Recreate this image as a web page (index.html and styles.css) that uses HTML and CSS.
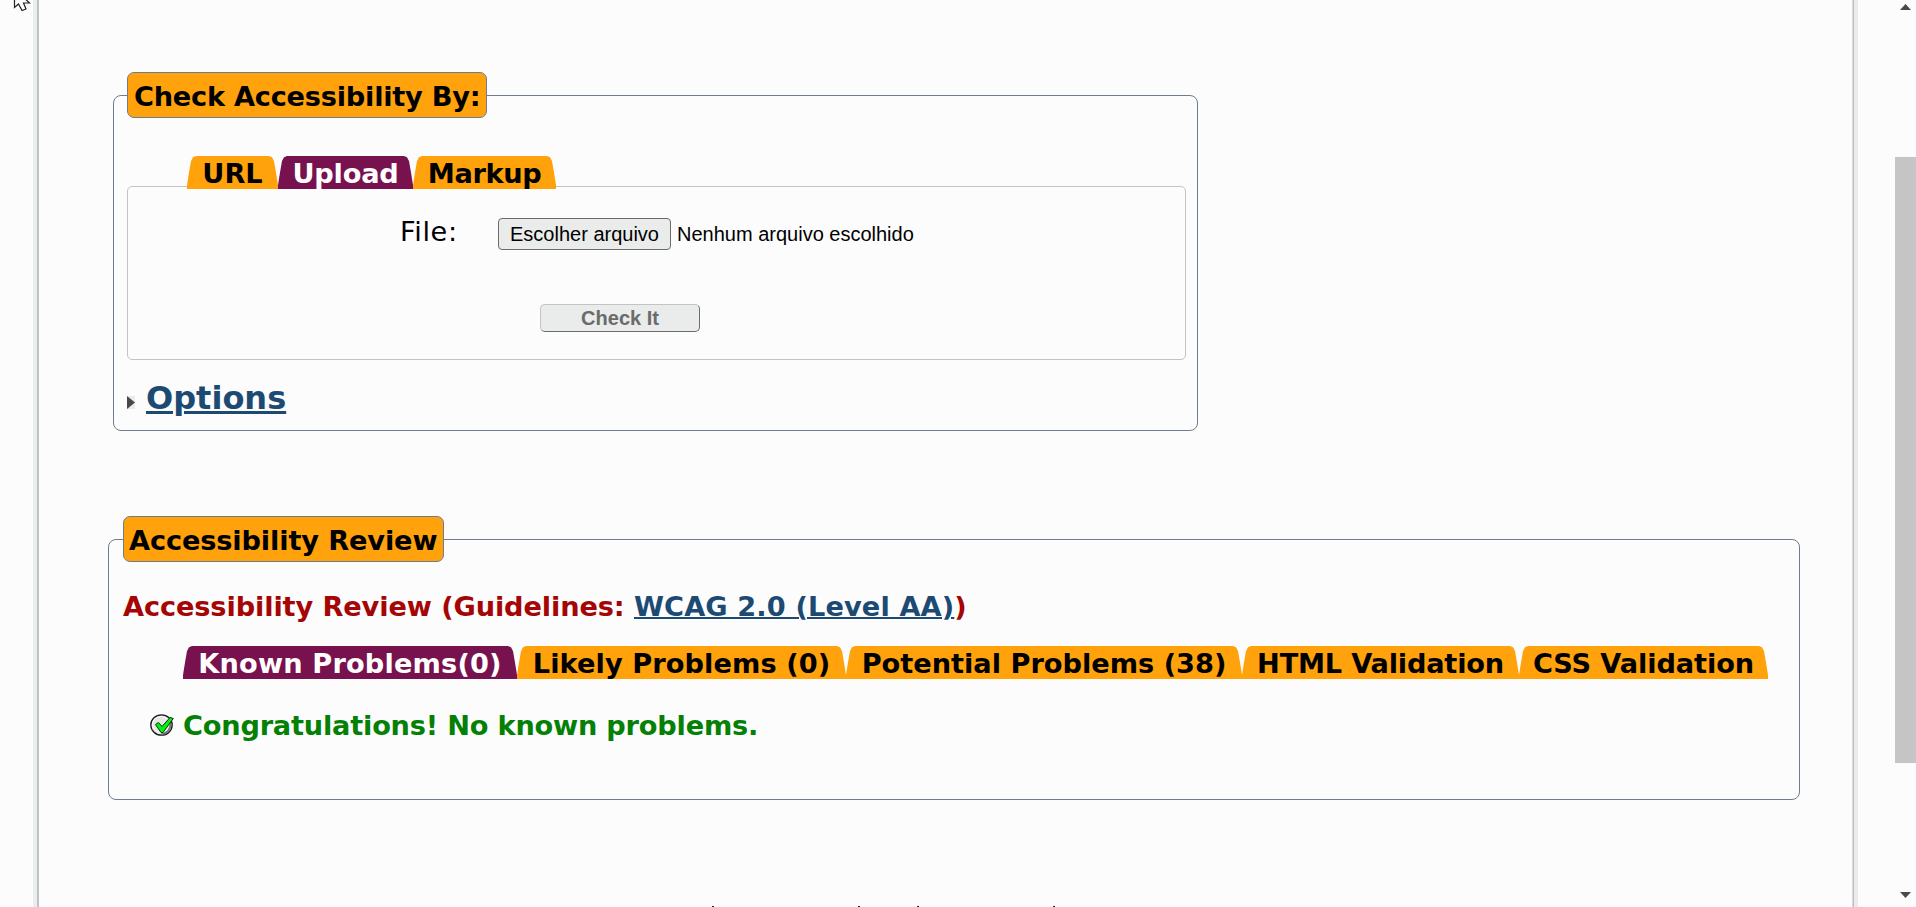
FILE: index.html
```html
<!DOCTYPE html>
<html lang="en">
<head>
<meta charset="utf-8">
<title>Accessibility Checker</title>
<link rel="stylesheet" href="styles.css">
</head>
<body>
<div class="window">
  <main class="page">
    <section class="box checker">
      <h2 class="legend legend-check"><span>Check Accessibility By:</span></h2>
      <nav class="tabs input-tabs">
        <a class="tab t-url">URL</a><a class="tab active t-upload">Upload</a><a class="tab t-markup">Markup</a>
      </nav>
      <div class="panel">
        <div class="file-row">
          <label class="file-label">File:</label>
          <button class="choose">Escolher arquivo</button>
          <span class="file-name">Nenhum arquivo escolhido</span>
        </div>
        <button class="submit">Check It</button>
      </div>
      <div class="options">
        <svg class="arrow" width="8" height="13" viewBox="0 0 8 13"><rect width="8" height="13" fill="#e9ecec"/><path d="M0 0 8 6.5 0 13z" fill="#484848"/></svg>
        <a class="link">Options</a>
      </div>
    </section>

    <section class="box review">
      <h2 class="legend legend-review"><span>Accessibility Review</span></h2>
      <h3 class="guideline">Accessibility Review (Guidelines: <a class="link">WCAG 2.0 (Level AA)</a>)</h3>
      <nav class="tabs result-tabs">
        <a class="tab active t-known">Known Problems(0)</a><a class="tab t-likely">Likely Problems (0)</a><a class="tab t-potential">Potential Problems (38)</a><a class="tab t-html">HTML Validation</a><a class="tab t-css">CSS Validation</a>
      </nav>
      <p class="congrats">
        <svg class="ok" width="24" height="22" viewBox="0 0 24 22"><ellipse cx="11.500" cy="11" rx="10.700" ry="10.200" fill="#dcdcdc" stroke="#1a1a1a" stroke-width="1.300"/><ellipse cx="11" cy="10.500" rx="8.500" ry="8" fill="#e6e6e6" stroke="#fff" stroke-width="1.200"/><path d="M20.500 9c0 6-3 10.500-9 11" fill="none" stroke="#777" stroke-width="2"/><path d="M5.500 10.500 8.500 8.500l3.500 4L20 3.500l3.300 1L13 18.500h-2z" fill="#00f50a" stroke="#0b300b" stroke-width="1"/></svg>
        <span>Congratulations! No known problems.</span>
      </p>
    </section>
    <footer class="next-line"><i></i><i></i><i></i><i></i></footer>
  </main>
  <aside class="scrollbar">
    <svg width="11" height="6" viewBox="0 0 11 6"><path d="M0 6 5.500 0 11 6z" fill="#4a4a4a"/></svg>
    <div class="thumb"></div>
    <svg width="11" height="6" viewBox="0 0 11 6"><path d="M0 0 5.500 6 11 0z" fill="#4a4a4a"/></svg>
  </aside>
</div>
<svg class="cursor" width="22" height="11" viewBox="0 0 22 11"><path d="M2.500-8V7.500L6.500 4l3.500 6.500 4-1.500L11.500 3H17.500L6-8" fill="#fff" stroke="#222" stroke-width="1.200"/></svg>
</body>
</html>
```
FILE: styles.css
```css
* { box-sizing: border-box; }
body {
  margin: 0;
  background: #fcfcfc;
  color: #000;
  font-family: "DejaVu Sans", Verdana, sans-serif;
  font-size: 27.2px;
  overflow: hidden;
}
.window { display: flex; height: 907px; }
.page {
  display: flex;
  flex-direction: column;
  align-items: flex-start;
  width: 1825px;
  margin-left: 33px;
  border-left: 4px solid #e9eded;
  border-right: 4px solid #ebebeb;
  box-shadow: inset 2px 0 #c2c2c2, inset -1px 0 #bebebe, inset -2px 0 #d9d9e2;
  padding: 72px 0 0 71px;
}
.box { border: 1px solid #6f7c8f; border-radius: 8px; }
.checker { width: 1085px; height: 336px; margin: 23px 0 0 5px; padding: 0 11px 0 13px; }
.review { width: 1692px; height: 261px; margin-top: 108px; padding: 0 14px; }

.legend {
  display: flex;
  align-items: center;
  height: 46px;
  margin: -24px 0 0;
  padding: 3px 0 0 6px;
  border: 1px solid #6f7c8f;
  border-radius: 7px;
  background: #ffa20c;
  font-size: 27.2px;
  font-weight: bold;
  white-space: nowrap;
}
.legend-check { width: 360px; letter-spacing: -.23px; }
.legend-review { width: 321px; padding-left: 5px; letter-spacing: -.13px; }

.tabs { display: flex; position: relative; font-weight: bold; }
.tab {
  height: 33px;
  line-height: 36px;
  text-align: center;
  white-space: nowrap;
  background: #ffa20c;
  clip-path: polygon(0 100%, 0 88%, 2px 50%, 4px 15%, 6px 4%, 9px 0, calc(100% - 9px) 0, calc(100% - 6px) 4%, calc(100% - 4px) 15%, calc(100% - 2px) 50%, 100% 88%, 100% 100%);
}
.active { background: #77124f; color: #fff; }
.input-tabs { margin: 38px 0 0 60px; }
.t-url { width: 91px; }
.t-upload { width: 135px; letter-spacing: -.2px; }
.t-markup { width: 143px; letter-spacing: -.35px; }

.panel {
  height: 174px;
  margin-top: -3px;
  padding: 31px 0 0 272px;
  border: 1px solid #c3c3c3;
  border-radius: 5px;
}
.file-row { display: flex; align-items: center; height: 32px; }
.file-label { width: 98px; line-height: 32px; padding-bottom: 5px; letter-spacing: .6px; }
button, .file-name { font-family: "Liberation Sans", Arial, sans-serif; font-size: 20px; white-space: nowrap; }
.choose {
  width: 173px;
  height: 32px;
  padding: 0;
  border: 1px solid #6b6b6b;
  border-radius: 4px;
  background: #e9ecea;
}
.file-name { margin-left: 6px; }
.submit {
  display: block;
  width: 160px;
  height: 28px;
  margin: 54px 0 0 140px;
  padding: 0;
  border: 1px solid;
  border-color: #c3c3c3 #6b6b6b #6b6b6b #c3c3c3;
  border-radius: 5px;
  background: #e9ecea;
  color: #6b6b6b;
  font-weight: bold;
}
.options { display: flex; align-items: center; height: 52px; margin-top: 12px; font-size: 32px; font-weight: bold; }
.arrow { margin: 8px 11px 0 0; }
.link { color: #1c4a73; text-decoration: underline; text-decoration-thickness: 2px; }
.options .link { text-decoration-thickness: 3px; }

.guideline { margin: 29px 0 0; height: 32px; line-height: 32px; font-size: 27.2px; letter-spacing: -.11px; color: #a50505; white-space: nowrap; }
.guideline .link { letter-spacing: .12px; }
.result-tabs { margin: 23px 0 0 60px; }
.t-known { width: 334px; letter-spacing: .16px; }
.t-likely { width: 329px; letter-spacing: .08px; }
.t-potential { width: 396px; }
.t-html { width: 277px; letter-spacing: -.2px; }
.t-css { width: 249px; letter-spacing: -.1px; }
.congrats { display: flex; align-items: center; margin: 30px 0 0 27px; height: 32px; color: #048004; font-weight: bold; letter-spacing: -.2px; white-space: nowrap; }
.congrats span { margin-left: 9px; }

/* Tops of the ascenders of the line below the fold */
.next-line { display: flex; margin: auto 0 0 604px; }
.next-line i { width: 2px; height: 1px; background: #222; margin-right: 144px; }
.next-line i:nth-child(2) { margin-right: 57px; }
.next-line i:nth-child(3) { margin-right: 134px; }

.scrollbar { display: flex; flex-direction: column; align-items: center; width: 21px; margin-left: 37px; padding: 4px 0; }
.thumb { width: 21px; height: 606px; margin: 147px 0 129px; background: #c5c5c5; }
.cursor { position: absolute; left: 12px; top: 0; }
```
